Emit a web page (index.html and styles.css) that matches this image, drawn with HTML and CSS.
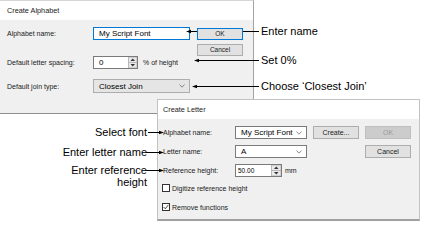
FILE: index.html
```html
<!DOCTYPE html>
<html lang="en">
<head>
<meta charset="utf-8">
<title>Create Alphabet / Create Letter</title>
<link rel="stylesheet" href="styles.css">
</head>
<body>
<div class="canvas">
  <section class="win win-alpha">
    <header class="win-title">Create Alphabet</header>
    <div class="win-body alpha-body">
      <div class="form-alpha">
        <div class="row">
          <span class="lbl">Alphabet name:</span>
          <div class="edit focus">My Script Font</div>
        </div>
        <div class="row r2">
          <span class="lbl">Default letter spacing:</span>
          <div class="spin spin-a">
            <span class="spin-val">0</span>
            <svg class="spinbtn" width="9" height="11" viewBox="0 0 9 11"><rect x="0.5" y="0" width="8.5" height="11" fill="#e9e9e9" stroke="#b8b8b8"/><line x1="0.5" y1="5.5" x2="9" y2="5.5" stroke="#b8b8b8"/><path d="M2.5 4 L4.75 1.6 L7 4 Z" fill="#333"/><path d="M2.5 7 L4.75 9.4 L7 7 Z" fill="#333"/></svg>
          </div>
          <span class="unit">% of height</span>
        </div>
        <div class="row r3">
          <span class="lbl">Default join type:</span>
          <div class="combo list"><span>Closest Join</span><svg width="6" height="4" viewBox="0 0 6 4"><polyline points="0.5,0.5 3,3.2 5.5,0.5" fill="none" stroke="#707070" stroke-width="0.8"/></svg></div>
        </div>
      </div>
      <div class="btns">
        <button class="btn default">OK</button>
        <button class="btn">Cancel</button>
      </div>
    </div>
  </section>

  <section class="win win-letter">
    <header class="win-title">Create Letter</header>
    <div class="win-body letter-body">
      <div class="lgrid">
        <span class="lbl2">Alphabet name:</span>
        <div class="combo"><span>My Script Font</span><svg width="6" height="4" viewBox="0 0 6 4"><polyline points="0.5,0.5 3,3.2 5.5,0.5" fill="none" stroke="#707070" stroke-width="0.8"/></svg></div>
        <button class="btn btn2">Create...</button>
        <button class="btn btn2" disabled>OK</button>
        <span class="lbl2">Letter name:</span>
        <div class="combo"><span>A</span><svg width="6" height="4" viewBox="0 0 6 4"><polyline points="0.5,0.5 3,3.2 5.5,0.5" fill="none" stroke="#707070" stroke-width="0.8"/></svg></div>
        <button class="btn btn2 col4">Cancel</button>
        <span class="lbl2">Reference height:</span>
        <div class="spin-wrap">
          <div class="spin spin-b">
            <span class="spin-val small">50.00</span>
            <svg class="spinbtn" width="10" height="11" viewBox="0 0 10 11"><rect x="0.5" y="0" width="9.5" height="11" fill="#e9e9e9" stroke="#b8b8b8"/><line x1="0.5" y1="5.5" x2="10" y2="5.5" stroke="#b8b8b8"/><path d="M3 4 L5.25 1.6 L7.5 4 Z" fill="#333"/><path d="M3 7 L5.25 9.4 L7.5 7 Z" fill="#333"/></svg>
          </div>
          <span class="unit mm">mm</span>
        </div>
      </div>
      <label class="check c1"><span class="box"></span>Digitize reference height</label>
      <label class="check c2"><span class="box"><svg width="6" height="6" viewBox="0 0 6 6"><polyline points="0.6,3 2.3,4.8 5.4,0.8" fill="none" stroke="#333" stroke-width="0.9"/></svg></span>Remove functions</label>
    </div>
  </section>

  <svg class="callouts" width="429" height="222" viewBox="0 0 429 222">
    <g stroke="#000" stroke-width="1">
      <line x1="190" y1="31.5" x2="197" y2="31.5"/>
      <line x1="243" y1="31.5" x2="259" y2="31.5"/>
      <line x1="198" y1="60.5" x2="259" y2="60.5"/>
      <line x1="196" y1="86.5" x2="259" y2="86.5"/>
      <line x1="148" y1="132.5" x2="160" y2="132.5"/>
      <line x1="146" y1="152.5" x2="160" y2="152.5"/>
      <line x1="146" y1="170.5" x2="160" y2="170.5"/>
    </g>
    <g fill="#000">
      <polygon points="186,31.5 191,29.8 191,33.2"/>
      <polygon points="194,60.5 199,58.8 199,62.2"/>
      <polygon points="192,86.5 197,84.8 197,88.2"/>
      <polygon points="164,132.5 159,130.8 159,134.2"/>
      <polygon points="164,152.5 159,150.8 159,154.2"/>
      <polygon points="164,170.5 159,168.8 159,172.2"/>
    </g>
  </svg>

  <div class="note n-name">Enter name</div>
  <div class="note n-set">Set 0%</div>
  <div class="note n-join">Choose ‘Closest Join’</div>
  <div class="note left n-font">Select font</div>
  <div class="note left n-letter">Enter letter name</div>
  <div class="note left n-ref">Enter reference<br>height</div>
</div>
</body>
</html>
```

FILE: styles.css
```css
* { box-sizing: border-box; }

body {
  margin: 0;
  background: #fff;
  font-family: "Liberation Sans", Arial, sans-serif;
}

.canvas {
  position: relative;
  width: 429px;
  height: 222px;
  overflow: hidden;
  background: #fff;
}

/* ---------- windows ---------- */
.win {
  position: absolute;
  display: flex;
  flex-direction: column;
  background: #f0f0f0;
}

.win-alpha {
  left: 0;
  top: 0;
  width: 254px;
  height: 114px;
  border-top: 1px solid #d6d6d6;
  border-right: 1px solid #a3a3a3;
  border-bottom: 1px solid #8e8e8e;
}

.win-letter {
  left: 157px;
  top: 99px;
  width: 263px;
  height: 122px;
  border: 1px solid #c2c2c2;
  border-bottom: 2px solid #a0a0a0;
  z-index: 1;
}

.win-title {
  flex: none;
  height: 19px;
  background: #fff;
  color: #1a1a1a;
  font-size: 7.3px;
  line-height: 19px;
  padding-left: 7px;
}

.win-letter .win-title {
  padding-left: 5px;
}

.win-body {
  flex: 1;
}

/* ---------- Create Alphabet ---------- */
.alpha-body {
  display: flex;
  padding: 7px 0 0 7px;
}

.form-alpha {
  width: 183px;
}

.row {
  display: flex;
  align-items: center;
  height: 13px;
}

.r2 { margin-top: 16px; }
.r3 { margin-top: 10px; height: 14px; }

.lbl {
  flex: none;
  width: 86px;
  font-size: 7px;
  color: #1a1a1a;
}

.edit {
  height: 13px;
  width: 97px;
  border: 1px solid #7a7a7a;
  background: #fff;
  font-size: 8px;
  line-height: 11px;
  padding-left: 5px;
  color: #000;
}

.edit.focus {
  border-color: #0078d7;
}

.spin {
  display: flex;
  align-items: stretch;
  height: 13px;
  border: 1px solid #7a7a7a;
  background: #fff;
}

.spin-a { width: 45px; }
.spin-b { width: 47px; }

.spin-val {
  flex: 1;
  font-size: 8px;
  line-height: 11px;
  padding-left: 5px;
  color: #000;
}

.spin-val.small {
  font-size: 6.5px;
  padding-left: 2px;
}

.spinbtn {
  flex: none;
  display: block;
}

.unit {
  font-size: 7px;
  color: #1a1a1a;
  margin-left: 5px;
  white-space: nowrap;
}

.unit.mm {
  margin-left: 3px;
}

.combo {
  display: flex;
  align-items: center;
  justify-content: space-between;
  height: 13px;
  border: 1px solid #7a7a7a;
  background: #fff;
  font-size: 8px;
  color: #000;
  padding: 0 4px 0 5px;
}

.combo.list {
  width: 97px;
  height: 14px;
  background: #e5e5e5;
  border-color: #adadad;
}

.combo svg {
  display: block;
  flex: none;
}

.btns {
  width: 46px;
  margin-left: 7px;
  padding-top: 1px;
  display: flex;
  flex-direction: column;
  gap: 4px;
}

.btn {
  display: block;
  height: 12px;
  padding: 0;
  margin: 0;
  border: 1px solid #adadad;
  border-radius: 0;
  background: #e1e1e1;
  color: #1a1a1a;
  font-family: "Liberation Sans", Arial, sans-serif;
  font-size: 6.5px;
  line-height: 10px;
  text-align: center;
}

.btn.default {
  border-color: #0078d7;
}

.btn:disabled {
  background: #cccccc;
  border-color: #bfbfbf;
  color: #9a9a9a;
}

/* ---------- Create Letter ---------- */
.letter-body {
  padding: 7px 7px 0 5px;
}

.lgrid {
  display: grid;
  grid-template-columns: 66px 72px 46px 46px;
  grid-template-rows: 13px 13px 13px;
  column-gap: 6px;
  row-gap: 6px;
  align-items: center;
}

.lbl2 {
  font-size: 7px;
  color: #1a1a1a;
  white-space: nowrap;
}

.btn2 {
  height: 13px;
  line-height: 11px;
  font-size: 7px;
}

.col4 {
  grid-column: 4;
}

.spin-wrap {
  grid-column: 2 / span 2;
  display: flex;
  align-items: center;
}

.check {
  display: flex;
  align-items: center;
  gap: 2px;
  height: 8px;
  margin-left: -1px;
  font-size: 7px;
  color: #1a1a1a;
}

.c1 { margin-top: 7px; }
.c2 { margin-top: 11px; }

.box {
  flex: none;
  width: 8px;
  height: 8px;
  border: 1px solid #333;
  background: #fff;
  display: flex;
  align-items: center;
  justify-content: center;
}

.box svg { display: block; }

/* ---------- callouts ---------- */
.callouts {
  position: absolute;
  left: 0;
  top: 0;
  z-index: 2;
  pointer-events: none;
}

.note {
  position: absolute;
  z-index: 3;
  font-size: 11px;
  line-height: 13px;
  color: #000;
  white-space: nowrap;
}

.note.left {
  text-align: right;
  right: 282px;
}

.n-name { left: 261px; top: 25px; }
.n-set { left: 261px; top: 54px; }
.n-join { left: 261px; top: 80px; }
.n-font { top: 126px; }
.n-letter { top: 146px; right: 283px; }
.n-ref { top: 164px; right: 283px; line-height: 12px; }
```
